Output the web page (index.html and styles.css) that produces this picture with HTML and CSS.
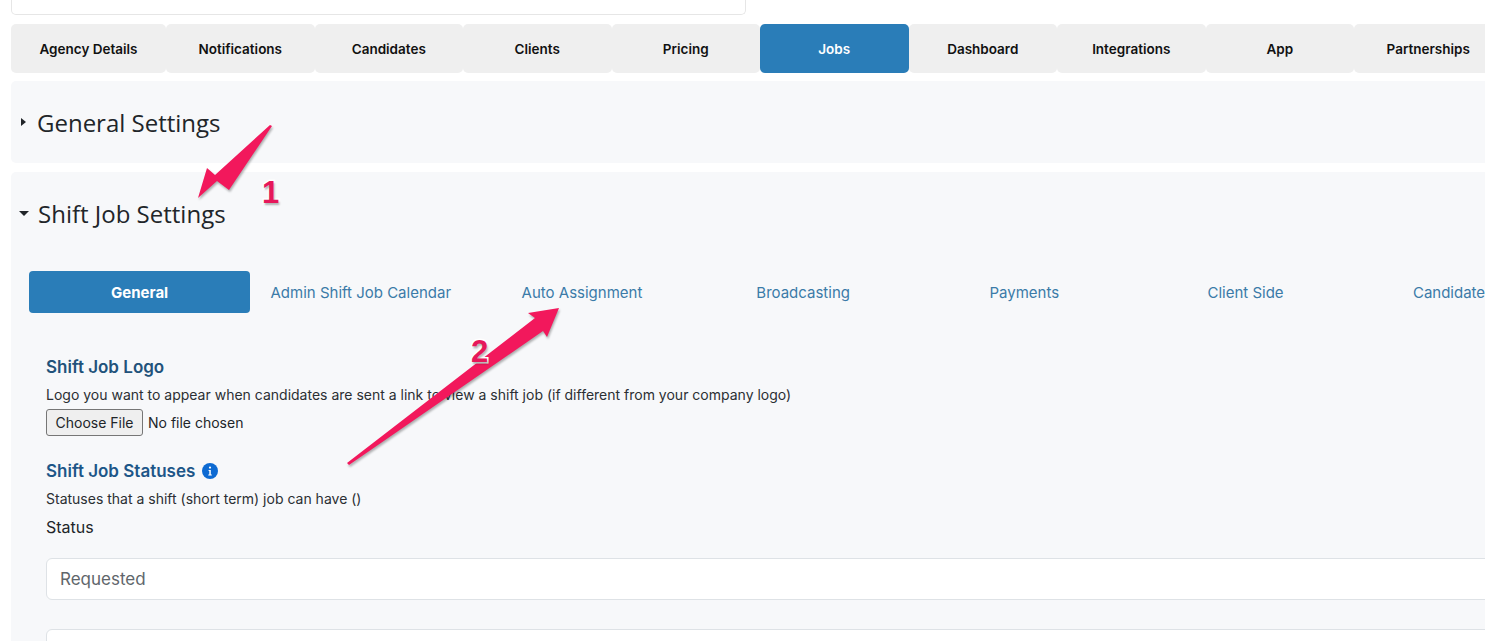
FILE: index.html
```html
<!DOCTYPE html>
<html lang="en">
<head>
    <meta charset="UTF-8">
    <meta name="viewport" content="width=device-width, initial-scale=1.0">
    <title>Settings - Jobs</title>
    <link rel="stylesheet" href="styles.css">
</head>
<body>
    <div class="page">
        <div class="search-box"></div>

        <div class="main-tabs">
            <a class="main-tab first">Agency Details</a>
            <a class="main-tab">Notifications</a>
            <a class="main-tab">Candidates</a>
            <a class="main-tab">Clients</a>
            <a class="main-tab">Pricing</a>
            <a class="main-tab active">Jobs</a>
            <a class="main-tab">Dashboard</a>
            <a class="main-tab">Integrations</a>
            <a class="main-tab">App</a>
            <a class="main-tab">Partnerships</a>
        </div>

        <section class="panel closed">
            <h2 class="panel-title"><span class="caret-right"></span>General Settings</h2>
        </section>

        <section class="panel open">
            <h2 class="panel-title"><span class="caret-down"></span>Shift Job Settings</h2>

            <div class="sub-tabs">
                <a class="sub-tab active">General</a>
                <a class="sub-tab">Admin Shift Job Calendar</a>
                <a class="sub-tab">Auto Assignment</a>
                <a class="sub-tab">Broadcasting</a>
                <a class="sub-tab">Payments</a>
                <a class="sub-tab">Client Side</a>
                <a class="sub-tab">Candidate Side</a>
            </div>

            <div class="form-area">
                <h3 class="field-title">Shift Job Logo</h3>
                <p class="field-help">Logo you want to appear when candidates are sent a link to view a shift job (if different from your company logo)</p>
                <div class="file-row">
                    <button class="file-button" type="button">Choose File</button>
                    <span class="file-name">No file chosen</span>
                </div>

                <h3 class="field-title statuses">Shift Job Statuses
                    <svg class="info-icon" viewBox="0 0 16 16" width="16" height="16">
                        <circle cx="8" cy="8" r="8" fill="#0d6ad2"/>
                        <circle cx="8" cy="4.6" r="1.1" fill="#fff"/>
                        <path d="M6.6 6.9h2.2v4.6h1v1.1H6.3v-1.1h1V8H6.6z" fill="#fff"/>
                    </svg>
                </h3>
                <p class="field-help">Statuses that a shift (short term) job can have ()</p>
                <div class="status-label">Status</div>
                <input class="text-input" type="text" value="Requested">
                <input class="text-input" type="text">
            </div>
        </section>
    </div>

    <!-- annotations drawn on top of the screenshot -->
    <svg class="arrows" width="1485" height="641" viewBox="0 0 1485 641">
        <polygon points="272,126 229,190 217,181 198,198 207,168 215,175 270,125" fill="#f2185c"/>
        <polygon points="347,463 535,318 528,313 559,308 547,337 543,331 349,465" fill="#f2185c"/>
    </svg>
    <span class="step-num one">1</span>
    <span class="step-num two">2</span>
</body>
</html>
```

FILE: styles.css
```css
html, body {
    margin: 0;
    height: 100%;
    overflow: hidden;
    background-color: white;
}
body {
    font-family: 'Inter', 'Liberation Sans', sans-serif;
    color: #212529;
}
.page {
    width: 1600px;
    padding-left: 11px;
}
.search-box {
    width: 733px;
    height: 14px;
    background-color: white;
    border: 1px solid #e6e6e6;
    border-top: 0;
    border-radius: 0 0 5px 5px;
    margin-bottom: 9px;
}
.main-tabs {
    display: flex;
    margin-bottom: 8px;
}
.main-tab {
    width: 148.5px;
    height: 49px;
    display: flex;
    align-items: center;
    justify-content: center;
    background-color: #efefef;
    border-radius: 5px;
    font-size: 13.5px;
    font-weight: 600;
    color: #111;
}
.main-tab.first {
    width: 155px;
}
.main-tab.active {
    background-color: #2a7db8;
    color: white;
}
.panel {
    background-color: #f7f8fa;
    border-radius: 5px;
}
.panel.closed {
    height: 82px;
    margin-bottom: 9px;
}
.panel.open {
    height: 500px;
}
.panel-title {
    display: flex;
    align-items: center;
    margin: 0;
    height: 82px;
    padding-left: 8px;
    font-family: 'Open Sans', sans-serif;
    font-size: 24px;
    font-weight: 400;
    color: #212529;
}
.caret-right {
    width: 0;
    height: 0;
    margin: 0 11px 0 2px;
    border-left: 5px solid #212529;
    border-top: 4.5px solid transparent;
    border-bottom: 4.5px solid transparent;
}
.caret-down {
    width: 0;
    height: 0;
    margin-right: 9px;
    border-top: 5px solid #212529;
    border-left: 5px solid transparent;
    border-right: 5px solid transparent;
}
.sub-tabs {
    display: flex;
    margin: 17px 0 0 18px;
}
.sub-tab {
    flex: 0 0 221.2px;
    height: 42px;
    display: flex;
    align-items: center;
    justify-content: center;
    border-radius: 4px;
    font-size: 15px;
    color: #3b7ba8;
    white-space: nowrap;
}
.sub-tab.active {
    background-color: #2a7db8;
    color: white;
    font-weight: 700;
}
.form-area {
    padding: 42px 0 0 35px;
}
.field-title {
    margin: 0;
    font-size: 17px;
    line-height: 24px;
    font-weight: 600;
    color: #22527a;
}
.field-title.statuses {
    display: flex;
    align-items: center;
    gap: 7px;
    margin-top: 23px;
    color: #1d5688;
}
.field-help {
    margin: 5px 0 0;
    font-size: 14px;
    line-height: 21px;
    color: #2b2f33;
}
.file-row {
    display: flex;
    align-items: center;
    gap: 5px;
    font-size: 14px;
    margin-top: 4px;
}
.file-button {
    width: 97px;
    height: 27px;
    padding: 0;
    background-color: #efefef;
    border: 1px solid #767676;
    border-radius: 3px;
    font-family: inherit;
    font-size: 14px;
    color: #212529;
}
.status-label {
    margin-top: 6px;
    font-size: 16px;
    line-height: 24px;
}
.text-input {
    display: block;
    box-sizing: border-box;
    width: 1500px;
    height: 42px;
    margin: 19px 0 29px;
    padding: 0 13px;
    background-color: white;
    border: 1px solid #dee2e6;
    border-radius: 6px;
    font-family: inherit;
    font-size: 17px;
    color: #60666b;
}
.arrows {
    position: absolute;
    top: 0;
    left: 0;
    filter: drop-shadow(1px 2px 1px rgba(0,0,0,0.3));
}
.step-num {
    position: absolute;
    font-family: 'Liberation Sans', sans-serif;
    font-size: 31px;
    font-weight: bold;
    line-height: 36px;
    color: #e6175a;
    -webkit-text-stroke: 3px white;
    paint-order: stroke fill;
    text-shadow: 1px 2px 2px rgba(0,0,0,0.3);
}
.step-num.one {
    left: 262px;
    top: 175px;
}
.step-num.two {
    left: 471px;
    top: 334px;
}
```
